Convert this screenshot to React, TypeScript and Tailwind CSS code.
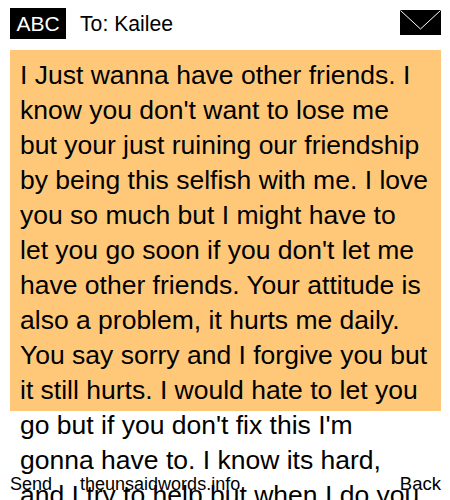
const lines = [
  "I Just wanna have other friends. I",
  "know you don't want to lose me",
  "but your just ruining our friendship",
  "by being this selfish with me. I love",
  "you so much but I might have to",
  "let you go soon if you don't let me",
  "have other friends. Your attitude is",
  "also a problem, it hurts me daily.",
  "You say sorry and I forgive you but",
  "it still hurts. I would hate to let you",
  "go but if you don't fix this I'm",
  "gonna have to. I know its hard,",
  "and I try to help but when I do you",
];

export default function App() {
  return (
    <div className="relative h-[500px] w-[450px] overflow-hidden bg-white text-black font-['Liberation_Sans',Arial,sans-serif]">
      <div className="flex items-start justify-between pl-[10px] pr-[9px] pt-2">
        <div className="flex items-center">
          <div className="flex h-[31px] w-[56px] items-center justify-center bg-black text-[21px] leading-[31px] text-white">ABC</div>
          <div className="ml-[14px] text-[21.2px] leading-[31px]">To: Kailee</div>
        </div>
        <svg width="41" height="27" viewBox="0 0 41 27" className="mt-[2px]">
          <rect width="41" height="25" fill="#000" />
          <path d="M0.5 0.5 L20.5 19 L40.5 0.5" fill="none" stroke="#fff" strokeWidth="1" />
        </svg>
      </div>
      <div className="mx-[10px] mt-[11px] h-[361px] w-[431px] bg-[#ffc879] pl-[10px] pt-[8px] text-[26.5px] leading-[35px] whitespace-nowrap">
        {lines.map((l) => (
          <div key={l}>{l}</div>
        ))}
      </div>
      <div className="absolute bottom-[6px] left-[10px] right-[9px] flex justify-between text-[18px] leading-[20px]">
        <div className="flex gap-[28px]">
          <span>Send</span>
          <span>theunsaidwords.info</span>
        </div>
        <span className="text-[18.5px]">Back</span>
      </div>
    </div>
  );
}
